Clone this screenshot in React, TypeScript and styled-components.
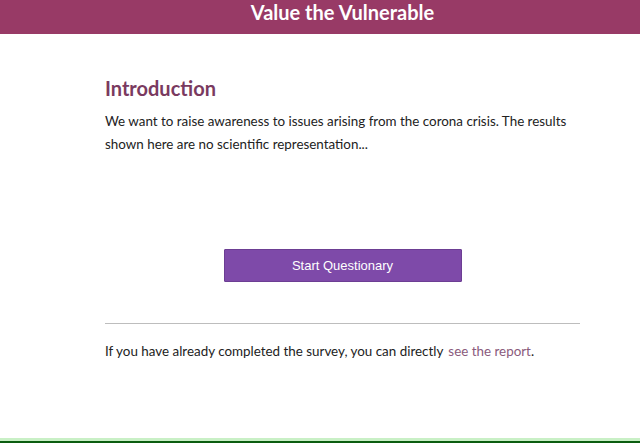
import React from "react";
import styled, { createGlobalStyle } from "styled-components";

const Global = createGlobalStyle`
  html, body { margin: 0; padding: 0; background: #fff; }
  body { font-family: Lato, "Noto Sans", sans-serif; }
`;

const Page = styled.div`
  height: 443px;
  box-sizing: border-box;
  display: flex;
  flex-direction: column;
  border-bottom: 2px solid #0b5d10;
  box-shadow: inset 0 -3px 0 #c9f0c6;
`;

const Header = styled.header`
  height: 34px;
  background: #983a66;
  display: flex;
  padding-left: 105px;
`;

const Title = styled.h1`
  width: 475px;
  margin: 0;
  text-align: center;
  color: #fff;
  font-family: Lato, sans-serif;
  font-weight: 700;
  font-size: 20px;
  line-height: 25px;
`;

const Main = styled.main`
  padding-left: 105px;
  display: flex;
  flex-direction: column;
  width: 475px;
`;

const Heading = styled.h2`
  margin: 40px 0 0;
  color: #7a3a60;
  font-weight: 700;
  font-size: 20px;
  line-height: 28px;
`;

const Paragraph = styled.p`
  margin: 8px 0 0;
  color: #222;
  font-size: 13.4px;
  line-height: 23px;
`;

const ButtonRow = styled.div`
  display: flex;
  justify-content: center;
  margin-top: 93px;
`;

const Button = styled.button`
  width: 238px;
  height: 33px;
  background: #7e4aa9;
  border: 1px solid #6c3e93;
  border-radius: 1px;
  color: #fff;
  font-family: "Liberation Sans", Arial, sans-serif;
  font-size: 13px;
  font-weight: 400;
  cursor: pointer;
`;

const Divider = styled.hr`
  margin: 41px 0 0;
  border: none;
  border-top: 1px solid #bdbdbd;
  height: 0;
`;

const Footer = styled.p`
  margin: 16px 0 0;
  color: #222;
  font-size: 13.4px;
  line-height: 23px;
`;

const Link = styled.a`
  color: #8a5a7c;
  text-decoration: none;
  margin-left: 5px;
`;

export default function App() {
  return (
    <>
      <Global />
      <Page>
        <Header>
          <Title>Value the Vulnerable</Title>
        </Header>
        <Main>
          <Heading>Introduction</Heading>
          <Paragraph>
            We want to raise awareness to issues arising from the corona crisis. The results shown here are no
            scientific representation...
          </Paragraph>
          <ButtonRow>
            <Button>Start Questionary</Button>
          </ButtonRow>
          <Divider />
          <Footer>
            If you have already completed the survey, you can directly
            <Link href="#">see the report</Link>.
          </Footer>
        </Main>
      </Page>
    </>
  );
}
